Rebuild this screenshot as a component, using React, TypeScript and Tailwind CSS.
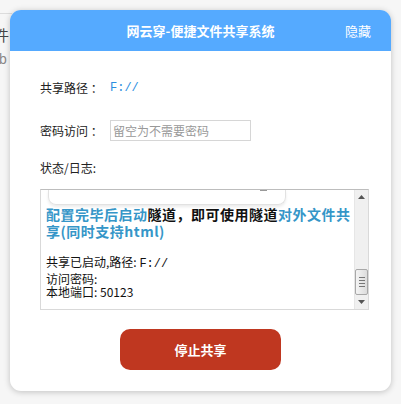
import React from "react";

const cjk = "font-['Noto_Sans_CJK_SC','Noto_Sans',sans-serif]";

export default function App() {
  return (
    <div className={`relative w-[401px] h-[404px] bg-[#f6f6f6] overflow-hidden ${cjk}`}>
      {/* background page peeking out */}
      <div className="absolute left-0 top-[13px] w-[12px] border-t border-[#dcdcdc]" />
      <div className="absolute left-[-6px] top-[26px] text-[15px] text-[#444] leading-[18px]">件</div>
      <div className="absolute left-[-1px] top-[50px] text-[14px] text-[#888] leading-[18px] font-['Liberation_Sans',sans-serif]">b</div>

      {/* dialog */}
      <div className="absolute left-[10px] top-[10px] w-[381px] h-[381px] bg-white rounded-[11px] shadow-[0_1px_6px_rgba(0,0,0,0.22)] overflow-hidden flex flex-col">
        <div className="h-[41px] bg-[#55aaff] flex items-center relative shrink-0">
          <div className="flex-1 text-center text-white text-[13px] font-bold">网云穿-便捷文件共享系统</div>
          <div className="absolute right-[20px] top-0 h-full flex items-center text-white text-[13px]">隐藏</div>
        </div>

        <div className="flex flex-col pl-[30px] pr-[22px]">
          <div className="flex items-center h-[20px] mt-[27px] text-[12px] text-[#222]">
            <span className="w-[70px]">共享路径 ：</span>
            <span className="text-[#2b8ee0] font-['Liberation_Mono',monospace] text-[12px]">F://</span>
          </div>

          <div className="flex items-center h-[21px] mt-[22px] text-[12px] text-[#222]">
            <span className="w-[70px]">密码访问 ：</span>
            <div className="w-[141px] h-[21px] border border-[#d6d6d6] flex items-center pl-[2px] text-[12px] text-[#999]">
              留空为不需要密码
            </div>
          </div>

          <div className="h-[20px] mt-[17px] flex items-center text-[12px] text-[#222]">状态/日志:</div>

          <div className="mt-[11px] w-[329px] h-[121px] border border-[#d9d9d9] border-t-[#bdbdbd] flex">
            <div className="flex-1 overflow-hidden">
              <div className="ml-[7px] w-[238px] h-[15px] border-x border-b border-[#e2e2e2] rounded-b-[8px] shadow-[0_2px_3px_rgba(0,0,0,0.08)] relative">
                <div className="absolute right-[18px] top-0 w-[7px] h-[1px] bg-[#999]" />
              </div>
              <div className="pl-[5px] pr-[2px] mt-[1px] text-[14px] leading-[17px] tracking-[0.5px] font-bold text-[#111]">
                <span className="text-[#3596c8]">配置完毕后启动</span>
                <span>隧道，即可使用隧道</span>
                <span className="text-[#3596c8]">对外文件共享(同时支持html)</span>
              </div>
              <div className="pl-[5px] mt-[15px] text-[12px] leading-[13.5px] text-[#111]">
                <div>共享已启动,路径: <span className="font-['Liberation_Mono',monospace]">F://</span></div>
                <div>访问密码:</div>
                <div>本地端口: 50123</div>
              </div>
            </div>
            {/* scrollbar */}
            <div className="w-[14px] bg-[#f0f0f0] border-l border-[#e6e6e6] flex flex-col items-center">
              <div className="h-[14px] flex items-center justify-center">
                <svg width="7" height="4" viewBox="0 0 7 4"><path d="M3.5 0 L7 4 L0 4 Z" fill="#555" /></svg>
              </div>
              <div className="flex-1" />
              <div className="w-[13px] h-[26px] border border-[#a8a8a8] rounded-[2px] bg-gradient-to-r from-[#f4f4f4] to-[#dcdcdc] flex flex-col items-center justify-center gap-[2px]">
                <div className="w-[6px] h-[1px] bg-[#777]" />
                <div className="w-[6px] h-[1px] bg-[#777]" />
                <div className="w-[6px] h-[1px] bg-[#777]" />
                <div className="w-[6px] h-[1px] bg-[#777]" />
              </div>
              <div className="h-[14px] flex items-center justify-center">
                <svg width="7" height="4" viewBox="0 0 7 4"><path d="M0 0 L7 0 L3.5 4 Z" fill="#555" /></svg>
              </div>
            </div>
          </div>

          <div className="mt-[19px] flex justify-center pr-[8px]">
            <button className="w-[161px] h-[41px] rounded-[10px] bg-[#bf3720] text-white text-[13px] font-bold">
              停止共享
            </button>
          </div>
        </div>
      </div>
    </div>
  );
}
